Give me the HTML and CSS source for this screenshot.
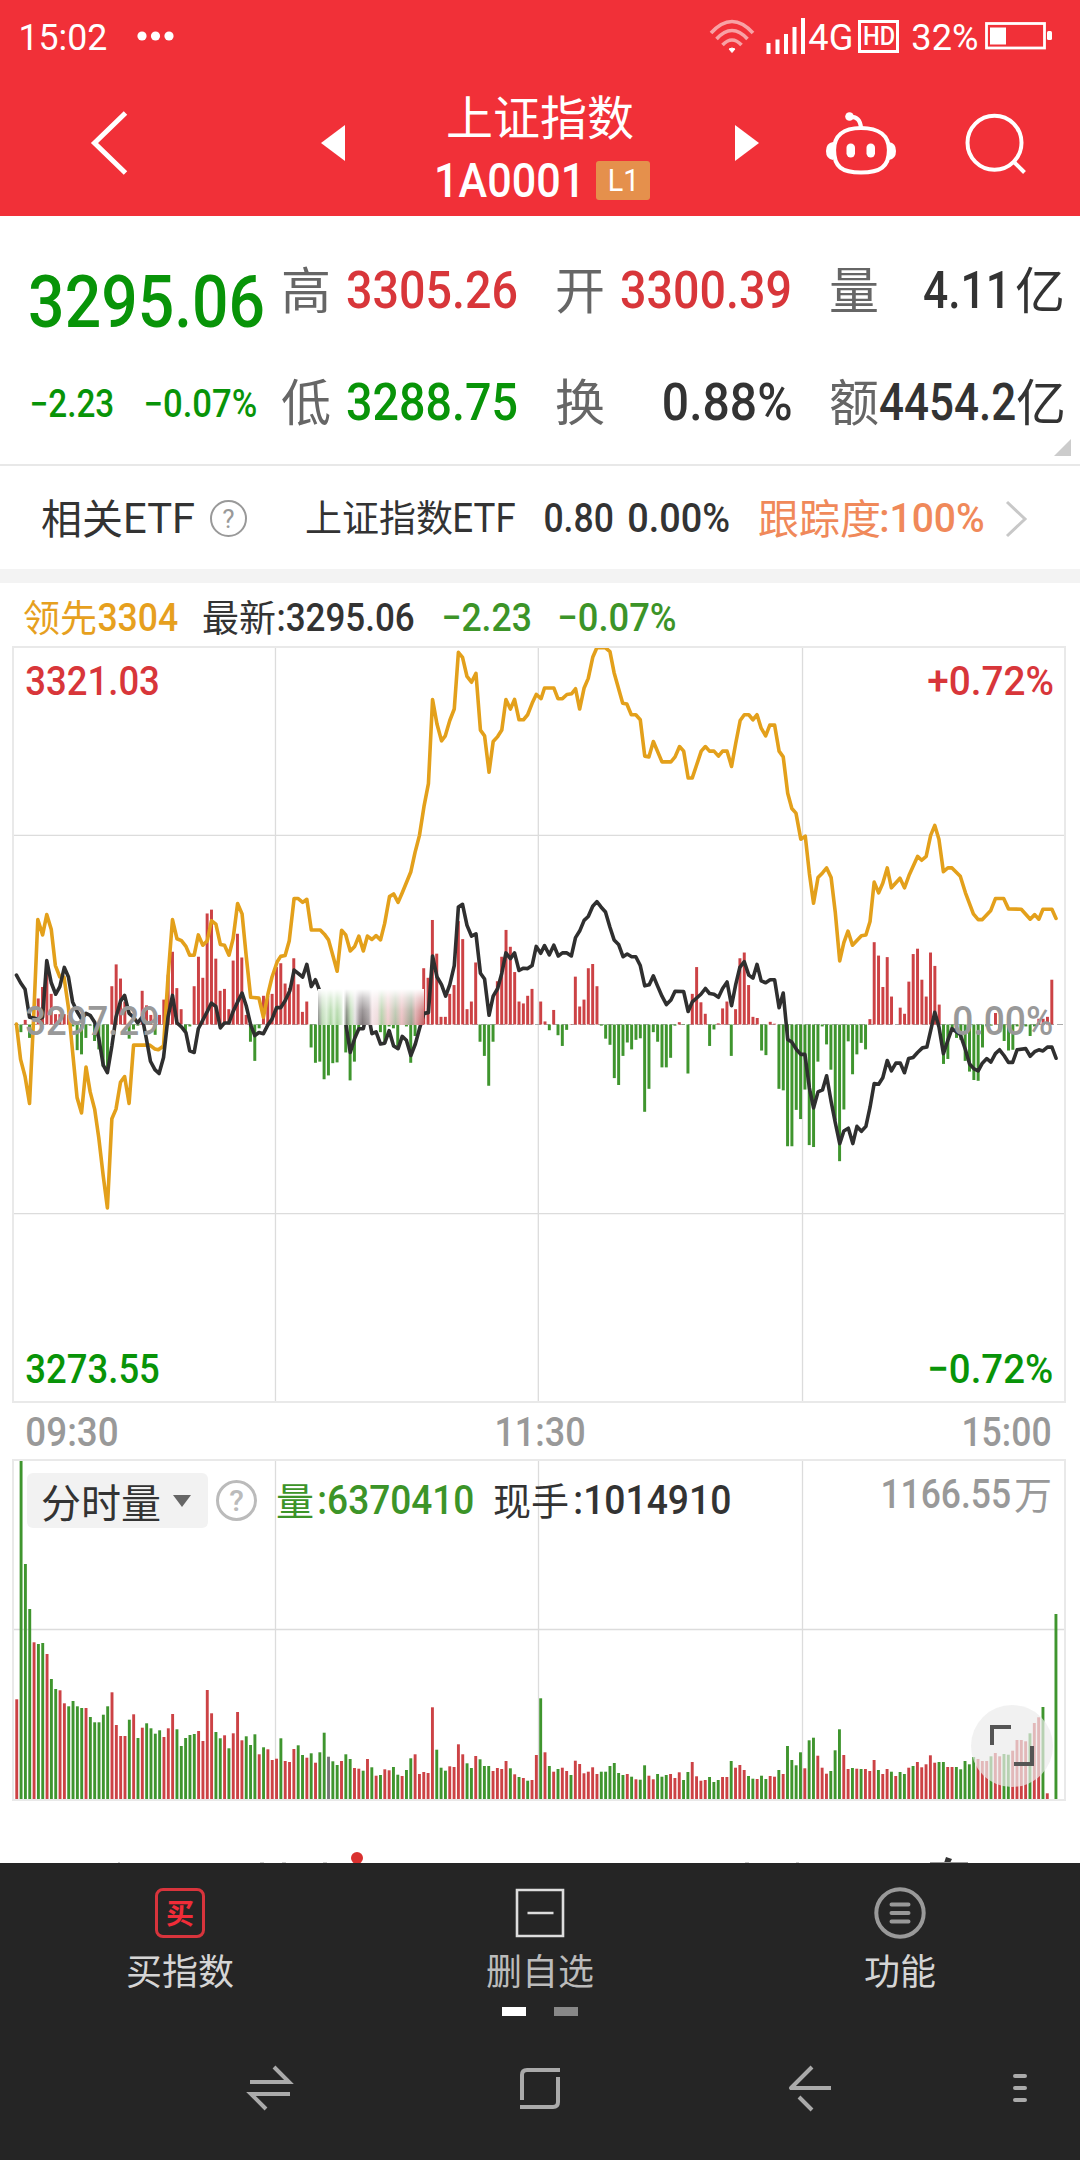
FILE: index.html
```html
<!DOCTYPE html>
<html lang="zh-CN">
<head>
    <meta charset="UTF-8">
    <meta name="viewport" content="width=device-width, initial-scale=1.0">
    <title>上证指数 1A0001</title>
    <link rel="stylesheet" href="styles.css">
</head>
<body>
<div class="phone">
    <header class="header">
        <div class="status">
            <span class="n clock" data-w="86">15:02</span>
            <svg class="dots" width="38" height="12"><g fill="#fff"><circle cx="5" cy="6" r="4.6"/><circle cx="18.500" cy="6" r="4.6"/><circle cx="32" cy="6" r="4.6"/></g></svg>
            <svg class="signal" width="97" height="40" viewBox="709 16 97 40">
                <g fill="none" stroke="#fff" stroke-width="3.6" opacity=".55">
                    <path d="M711 33Q732 10 753 33"/>
                    <path d="M716.500 39Q732 22 747.500 39"/>
                    <path d="M722.500 45Q732 35 741.500 45"/>
                </g>
                <path d="M729 49Q732 47 735 49L732 52.500z" fill="#fff" stroke="#fff" stroke-linejoin="round"/>
                <path d="M768.500 54V43M777.500 54V39.500M786 54V34M794.500 54V27M803 54V18" stroke="#fff" stroke-width="4"/>
            </svg>
            <span class="n net" data-w="42">4G</span>
            <span class="hd"><span class="n" data-w="30">HD</span></span>
            <span class="n percent" data-w="64">32%</span>
            <svg class="battery" width="68" height="28"><rect x="1.500" y="1.500" width="58" height="24.500" fill="none" stroke="#fff" stroke-width="2.800"/><path d="M5 5.500h16v17H5z" fill="#fff"/><rect x="62" y="9" width="5" height="9" rx="1.500" fill="#fff"/></svg>
        </div>
        <div class="titlebar">
            <svg class="back" width="38" height="64"><path d="M35.500 2L4.500 32l31 30" fill="none" stroke="#fff" stroke-width="5"/></svg>
            <svg class="tri" width="24" height="36"><path d="M24 0v36L0 18z" fill="#fff"/></svg>
            <div class="title">
                <div class="name zh">上证指数</div>
                <div class="code"><span class="n" data-w="147">1A0001</span><span class="badge"><span class="n" data-w="29">L1</span></span></div>
            </div>
            <svg class="tri" width="24" height="36"><path d="M0 0v36l24-18z" fill="#fff"/></svg>
            <svg class="robot" width="70" height="64" viewBox="826 110 70 64">
                <g fill="none" stroke="#fff" stroke-width="4.200">
                    <path d="M861 127C879 127 889 135 889 149C889 166 880 171.500 861 171.500C842 171.500 834 166 834 149C834 135 843 127 861 127z"/>
                    <path d="M850 116Q860 115 861 127"/>
                </g>
                <g fill="#fff"><circle cx="849.500" cy="115.500" r="4.300"/><rect x="846.500" y="142.500" width="8.500" height="14" rx="4.200"/><rect x="866.500" y="142.500" width="8.500" height="14" rx="4.200"/><path d="M833 141Q826 142 826 150T833 159zM889 141Q896 142 896 150T889 159z"/></g>
            </svg>
            <svg width="62" height="62" viewBox="965 112 62 62"><g fill="none" stroke="#fff" stroke-width="4"><circle cx="994.500" cy="142.700" r="27"/><path d="M1013 161l11.500 11.500"/></g></svg>
        </div>
    </header>

    <section class="quote">
        <div class="main"><span class="n last green" data-w="231">3295.06</span></div>
        <div class="cell"><span class="zh">高</span><span class="n red" data-w="168">3305.26</span></div>
        <div class="cell"><span class="zh">开</span><span class="n red" data-w="168">3300.39</span></div>
        <div class="cell"><span class="zh">量</span><span class="amount"><span class="n" data-w="84">4.11</span><span class="zh dark">亿</span></span></div>
        <div class="main change"><span class="n green" data-w="82">−2.23</span><span class="n green" data-w="111">−0.07%</span></div>
        <div class="cell"><span class="zh">低</span><span class="n green" data-w="168">3288.75</span></div>
        <div class="cell"><span class="zh">换</span><span class="n" data-w="126">0.88%</span></div>
        <div class="cell"><span class="zh">额</span><span class="amount tight"><span class="n" data-w="133">4454.2</span><span class="zh dark">亿</span></span></div>
        <i class="corner"></i>
    </section>

    <section class="etf">
        <span class="zh big">相关</span><span class="n latin" data-w="68">ETF</span>
        <span class="help"><span>?</span></span>
        <span class="zh mid">上证指数</span><span class="n latin small" data-w="60">ETF</span>
        <span class="n price" data-w="67">0.80</span>
        <span class="n rate" data-w="100">0.00%</span>
        <span class="zh big orange track">跟踪度</span><span class="n orange" data-w="102">:100%</span>
        <svg class="more" width="24" height="38"><path d="M2 2l18 17L2 36" fill="none" stroke="#c8c8c8" stroke-width="3"/></svg>
    </section>

    <section class="legend">
        <span class="zh lead">领先</span><span class="n lead" data-w="78">3304</span>
        <span class="zh newest">最新</span><span class="n" data-w="135">:3295.06</span>
        <span class="n lime diff" data-w="87">−2.23</span>
        <span class="n lime pct" data-w="116">−0.07%</span>
    </section>

    <section class="chart">
        <svg class="plot" width="1052" height="755" viewBox="38 18 3054 1972" preserveAspectRatio="none">
            <path class="grid" d="M800 18V1990M1563 18V1990M2330 18V1990M38 510H3092M38 1498H3092"/>
            <path class="zero" d="M38 1004H3092"/>
            <g id="momentum"></g>
            <polyline class="line leading" points="48,1003 60,1095 73,1140 86,1210 98,985 110,730 124,770 136,717 149,755 161,850 174,880 186,880 199,960 211,1075 224,1195 237,1235 250,1115 262,1180 275,1225 287,1300 300,1400 312,1483 325,1250 337,1225 350,1155 362,1140 375,1210 388,1058 435,1058 450,1068 460,1070 475,1060 488,880 501,730 514,780 527,785 540,800 551,823 564,823 576,770 589,797 602,785 614,733 627,742 640,795 652,797 665,823 677,780 690,688 703,715 715,825 728,933 752,935 765,985 778,925 790,880 805,840 815,826 828,824 840,785 854,675 866,675 879,685 891,677 904,757 930,757 942,768 954,783 967,825 979,865 992,758 1004,770 1017,812 1030,800 1042,773 1055,812 1067,773 1080,782 1092,772 1105,783 1117,740 1131,670 1143,663 1156,685 1168,660 1193,605 1205,555 1218,510 1231,435 1244,375 1256,155 1269,220 1282,263 1293,250 1306,210 1319,180 1331,32 1343,45 1356,95 1369,110 1382,87 1395,235 1407,250 1420,345 1432,265 1445,252 1457,235 1469,155 1482,180 1494,155 1507,208 1520,208 1532,195 1545,165 1557,142 1571,153 1581,125 1608,125 1620,153 1633,153 1646,142 1660,140 1671,127 1683,180 1696,125 1708,100 1721,45 1733,20 1758,20 1771,30 1783,85 1808,165 1820,167 1833,195 1846,195 1859,208 1872,303 1884,305 1897,265 1922,318 1948,318 1960,305 1973,278 1985,290 1998,360 2010,360 2023,325 2036,290 2048,278 2060,290 2073,290 2086,303 2098,290 2111,290 2124,330 2136,270 2149,210 2161,195 2174,195 2186,208 2198,195 2210,230 2223,250 2235,222 2249,222 2262,290 2274,305 2287,400 2299,440 2311,452 2325,520 2338,512 2350,610 2362,687 2375,620 2388,608 2400,595 2413,620 2425,710 2438,838 2450,790 2462,760 2475,797 2501,772 2514,770 2526,735 2538,632 2551,660 2563,635 2576,595 2588,647 2613,622 2626,647 2639,615 2664,565 2676,575 2689,565 2702,510 2714,484 2726,520 2739,605 2752,595 2764,595 2788,617 2803,660 2826,715 2840,730 2852,730 2876,707 2890,675 2914,675 2928,702 2965,703 2991,729 3004,717 3016,729 3028,703 3054,703 3066,727"/>
            <polyline class="line index" points="48,875 60,895 73,912 86,985 98,987 111,990 124,985 136,837 149,895 162,925 174,905 187,855 199,880 211,945 224,970 237,990 250,975 262,980 275,998 287,1040 300,1110 312,1130 325,1060 337,985 350,943 362,928 375,975 388,985 400,1000 413,985 425,1040 437,1100 450,1122 462,1132 475,1090 488,985 501,928 514,1000 527,1010 540,1025 551,1073 564,1077 576,1015 602,970 614,948 627,957 640,1013 652,1000 665,1000 677,970 690,945 703,922 715,955 728,1005 740,1033 752,1025 765,1028 778,1005 790,990 803,960 815,960 828,942 842,915 854,862 879,880 891,847 904,905 916,887 928,915 940,960 965,960 1004,1000 1017,1077 1030,1040 1042,1015 1055,1015 1067,965 1080,1028 1092,1023 1105,1055 1117,1053 1130,1020 1143,1060 1156,1067 1168,1035 1180,1045 1193,1085 1206,1055 1218,1015 1231,975 1244,973 1256,825 1269,880 1282,900 1294,930 1306,900 1319,850 1331,697 1343,690 1356,745 1369,773 1382,767 1395,870 1407,885 1420,980 1432,930 1445,910 1457,870 1469,817 1482,832 1494,817 1507,863 1520,857 1532,858 1545,850 1557,800 1570,818 1581,798 1595,822 1608,797 1621,825 1633,817 1646,817 1659,825 1671,777 1683,760 1696,732 1708,722 1721,695 1733,683 1745,697 1758,710 1771,750 1783,783 1796,795 1809,827 1821,820 1834,827 1846,827 1859,850 1872,903 1885,900 1897,877 1909,903 1922,930 1935,952 1948,940 1960,917 1985,918 1998,970 2010,945 2035,925 2048,910 2060,923 2073,925 2086,933 2098,910 2111,893 2124,955 2136,900 2148,855 2161,840 2174,875 2186,883 2198,847 2210,890 2223,895 2236,887 2249,887 2262,960 2274,922 2287,1043 2299,1050 2313,1070 2325,1082 2337,1082 2350,1170 2362,1222 2375,1180 2388,1175 2400,1138 2413,1205 2425,1260 2438,1315 2450,1282 2463,1275 2476,1315 2488,1270 2501,1283 2514,1270 2526,1220 2538,1158 2551,1160 2563,1143 2576,1098 2588,1125 2601,1105 2614,1105 2626,1130 2638,1093 2651,1090 2664,1077 2678,1065 2691,1063 2702,1020 2714,972 2726,1010 2739,1080 2752,1045 2764,1015 2788,1030 2803,1070 2815,1107 2828,1120 2840,1125 2852,1105 2865,1093 2877,1102 2890,1080 2902,1070 2915,1085 2928,1103 2940,1103 2953,1070 2978,1067 2991,1087 3004,1075 3016,1070 3028,1073 3041,1063 3054,1063 3066,1092"/>
        </svg>
        <div class="smear"></div>
        <span class="n tag top left red" data-w="131">3321.03</span>
        <span class="n tag top right red" data-w="123">+0.72%</span>
        <span class="n tag middle left grey" data-w="131">3297.29</span>
        <span class="n tag middle right grey" data-w="98">0.00%</span>
        <span class="n tag bottom left green" data-w="131">3273.55</span>
        <span class="n tag bottom right green" data-w="123">−0.72%</span>
    </section>

    <div class="times">
        <span class="n" data-w="90">09:30</span>
        <span class="n" data-w="88">11:30</span>
        <span class="n" data-w="87">15:00</span>
    </div>

    <section class="volume">
        <svg class="plot" width="1052" height="340">
            <path class="grid" d="M262.500 0V340M525.500 0V340M789.500 0V340M0 169.500H1052"/>
            <g id="bars"></g>
        </svg>
        <div class="volhead">
            <span class="picker"><span class="zh">分时量</span><svg width="18" height="12"><path d="M0 0h18l-9 12z" fill="#666"/></svg></span>
            <span class="help thick"><span>?</span></span>
            <span class="zh lime">量</span><span class="n lime" data-w="154">:6370410</span>
            <span class="zh hand">现手</span><span class="n" data-w="155">:1014910</span>
            <span class="n grey max" data-w="128">1166.55</span><span class="zh grey">万</span>
        </div>
        <div class="expand"><svg width="44" height="44"><path d="M2 21V3h19M42 22v18H24" fill="none" stroke="#555" stroke-width="4"/></svg></div>
    </section>

    <div class="peek">
        <svg width="1080" height="63">
            <circle cx="357" cy="58" r="6" fill="#d9302f"/>
            <path d="M946 57l6 2-2 4h-6z" fill="#333"/>
            <path d="M930 62.500h38" stroke="#999"/>
            <path d="M118 62.500h2M260 62.500h4M282 62.500h4M323 62.500h4M745 62.500h4M796 62.500h3" stroke="#ccc"/>
        </svg>
    </div>

    <footer class="footer">
        <nav class="tabs">
            <a class="tab"><span class="buy zh">买</span><span class="zh">买指数</span></a>
            <a class="tab"><svg width="50" height="50"><path d="M2 2h46v46H2zM12.500 25h26" fill="none" stroke="#ddd" stroke-width="2.600"/></svg><span class="zh dim">删自选</span></a>
            <a class="tab"><svg width="52" height="52"><g fill="none" stroke="#999" stroke-width="4"><circle cx="26" cy="26" r="23.700"/><path d="M17.500 17.500h17M17.500 26h17M17.500 34.500h17" stroke-linecap="round"/></g></svg><span class="zh">功能</span></a>
        </nav>
        <div class="pager"><i class="on"></i><i></i></div>
        <svg class="sysnav" width="1080" height="60" viewBox="0 2058 1080 60">
            <g fill="none" stroke="#aaa" stroke-width="4">
                <path d="M250 2082h39L274 2067M290 2094h-39L266 2109"/>
                <path d="M560 2070H527Q522 2070 522 2075V2100M520 2107H553Q558 2107 558 2102V2077"/>
                <path d="M812 2067L791 2088H831M799 2097l13 13" stroke-linejoin="round"/>
                <path d="M1015 2076h10M1015 2088h10M1015 2100h10" stroke-linecap="round"/>
            </g>
        </svg>
    </footer>
</div>

<script>
    // squeeze the digits so that they look like a condensed DIN face
    function fit() {
        document.querySelectorAll('.n').forEach(el => {
            let text = document.createElement('span');
            text.textContent = el.textContent;
            text.className = 'ink';
            el.textContent = '';
            el.appendChild(text);
            let w = Number(el.dataset.w);
            let size = parseFloat(getComputedStyle(el).fontSize);
            let scale = w / (text.offsetWidth - size * 0.09);
            el.style.width = w + 'px';
            text.style.transform = 'scaleX(' + scale.toFixed(4) + ') translateX(-0.045em)';
        });
    }

    // one value per minute, above or below the previous close
    let momentum = [0, -20, 12, -35, 0, 68, 98, 160, 80, 27, 27, 27, 25, -5, -67, -78, -35, -3, -43, -65,
        -110, -125, 100, 157, 120, 60, -37, -13, -3, 88, 50, 25, -27, 25, 65, 130, 190, 95, 40, -20,
        -5, 100, 177, 122, 290, 300, 172, 88, 93, 40, 167, 237, 175, 25, -45, -95, -10, 75, 75, 80,
        150, 160, 107, 95, 173, 105, 33, 60, -60, -100, -97, -143, -133, -101, -99, 0, -73, -146, -97, -10,
        0, 0, 0, 0, -20, -50, -5, -10, -65, 0, -5, -100, -30, 0, 147, 122, 273, 185, 20, 20,
        80, 103, 270, 223, 40, 60, 162, -45, -82, -160, -45, 113, 177, 247, 203, 137, 60, 55, 75, 93,
        0, 60, 8, -15, 38, -28, -56, -14, 1, 125, 47, 65, 147, 158, 100, -3, -37, -53, -140, -158,
        -82, -47, -65, -40, -36, -228, -168, -20, -45, -112, -112, -87, -3, 6, -1, -128, 80, 150, 58, 28,
        -56, -13, 3, 42, 60, -82, 40, 173, 188, 103, 20, 17, -68, -80, 7, 2, -168, -172, -318, -318,
        -223, -247, -170, -315, -320, -97, -5, -52, -118, -250, -357, -222, -44, -130, -78, -48, -65, 14, 215, 180,
        98, 176, 73, 0, 44, 28, 112, 184, 198, 117, 73, 188, 153, 52, -103, -90, -10, -35, -40, -95,
        -123, -145, -147, -60, -5, -3, 30, -20, -43, -68, -66, -5, 10, -5, -30, -5, 15, 15, 20, 117, 0];

    // r = up minute, g = down minute, k = unchanged
    let volume = 'r302 g1022 g708 g573 r473 g468 g471 r438 g363 g333 r329 r290 g281 g297 g281 g276 r276 g249 g233 g233 ' +
        'g256 g281 r323 r225 r192 r192 g241 r257 g186 r217 g230 g215 g199 g209 r189 r215 r258 g212 g162 g186 ' +
        'g195 g198 r207 r177 r330 r260 g204 g185 r194 g155 r200 r264 r179 g191 g165 g197 r137 g158 r152 r120 ' +
        'r124 g185 r117 r114 r153 g164 g135 r127 g140 r112 g143 g202 k130 g116 g105 r117 g137 g123 r96 r94 ' +
        'g88 r123 g98 r73 g75 r92 r89 g99 g76 r72 g90 g125 r137 r78 r84 r81 r278 g151 g97 g88 ' +
        'r101 r99 r167 r137 g110 g96 r132 g122 g102 g102 r87 r96 r93 r117 g95 r77 g69 r66 g58 r60 ' +
        'r135 g305 r143 g102 r85 g93 r97 r87 g75 r118 r108 r80 r85 r98 r78 g85 g85 g102 g111 g81 ' +
        'g75 r78 g70 r62 g61 g104 r73 r62 g78 g70 g75 r78 r66 r83 g60 g84 r114 r71 r58 r60 ' +
        'g69 g54 g60 r69 r69 g117 r97 r105 r90 g72 g64 r63 g73 g63 r72 r70 g90 r78 g162 g120 ' +
        'g104 g143 r95 g179 g187 r133 r97 r79 g87 g149 g212 r135 r93 g96 r94 g93 r93 r87 r120 g90 ' +
        'r78 r93 g85 r72 g84 g78 r97 g102 r114 r98 r107 r134 r112 g114 g114 r99 r99 g99 g92 g117 ' +
        'g107 g129 r123 r117 r117 g131 r141 r131 g138 g136 r148 r180 r180 r176 g200 r231 r248 g279 r20 k0 g558';

    let out = '';
    momentum.forEach((v, i) => {
        if (!v) return;
        let x = (48 + 12.575 * i - 4).toFixed(1);
        out += '<rect class="' + (v > 0 ? 'r' : 'g') + '" x="' + x + '" y="' + (1004 - Math.max(v, 0)) + '" width="8.6" height="' + Math.abs(v) + '"/>';
    });
    document.getElementById('momentum').innerHTML = out;

    out = '';
    volume.split(' ').forEach((item, i) => {
        let h = Number(item.slice(1)) / 3;
        let x = (2.3 + 4.33 * i).toFixed(2);
        out += '<rect class="' + item[0] + '" x="' + x + '" y="' + (340 - h).toFixed(1) + '" width="2.9" height="' + h.toFixed(1) + '"/>';
    });
    document.getElementById('bars').innerHTML = out;

    fit();
</script>
</body>
</html>
```

FILE: styles.css
```css
* { box-sizing: border-box; }
body { margin: 0; background: #fff; color: #333; font-family: Roboto, "Noto Sans CJK SC", sans-serif; }
.phone { width: 1080px; height: 2160px; overflow: hidden; }
svg { display: block; flex: none; }

.n { display: inline-block; flex: none; line-height: 1; font-weight: 500; font-size: 40px; white-space: nowrap; }
.ink { display: inline-block; transform-origin: 0 50%; white-space: nowrap; }
.zh { flex: none; font-family: "Noto Sans CJK SC", sans-serif; line-height: 1; margin-top: -.1em; white-space: nowrap; }
.red { color: #d8363a; }
.green { color: #089408; }
.lime { color: #3c9428; }
.grey { color: #999; }
.orange { color: #f0895a; }

.header { height: 216px; background: #f13038; color: #fff; }
.status { display: flex; align-items: center; height: 72px; padding-left: 20px; }
.status .n { font-size: 36px; font-weight: 400; }
.clock { margin-top: 3px; }
.dots { margin-left: 31px; }
.signal { margin-left: 534px; }
.net { margin: 3px 6px 0 4px; }
.hd { display: flex; align-items: center; justify-content: center; width: 41px; height: 33px; border: 3px solid #fff; }
.status .hd .n { font-size: 25px; font-weight: 500; }
.percent { margin: 3px 8px 0 14px; }
.titlebar { display: grid; grid-template-columns: 231px 115px 299px 91px 139px 62px; padding-left: 90px; height: 144px; align-items: center; }
.titlebar > svg { margin-top: -2px; }
.title { padding-top: 13px; }
.name { font-size: 47px; margin: -6px 0 0 10px; }
.code { display: flex; align-items: center; margin-top: 19px; }
.code .n { font-size: 48px; }
.badge { display: flex; align-items: center; justify-content: center; width: 54px; height: 39px; margin-left: 13px; border-radius: 3px; background: #e5904c; }
.badge .n { font-size: 31px; font-weight: 400; }

.quote { position: relative; display: grid; grid-template-columns: 211px repeat(3, 235px); grid-auto-rows: 112px; column-gap: 39px; align-items: center; height: 250px; padding: 17px 16px 0 31px; border-bottom: 2px solid #e8e8e8; }
.quote .last { font-size: 73px; margin-top: 27px; }
.quote .change { display: flex; gap: 32px; padding-top: 6px; }
.quote .change .n { font-size: 38px; }
.cell { display: flex; align-items: center; justify-content: space-between; color: #666; }
.cell .zh { font-size: 50px; }
.cell .n { font-size: 52px; margin-top: 3px; }
.cell .n:not(.red):not(.green), .cell .dark { color: #333; }
.amount { display: flex; align-items: center; gap: 6px; margin-right: -1px; }
.tight { gap: 2px; margin-left: -10px; }
.tight .zh { margin-right: -1px; }
.corner { position: absolute; right: 9px; bottom: 8px; border-style: solid; border-width: 0 0 17px 17px; border-color: transparent transparent #ccc; }

.etf { display: flex; align-items: center; height: 103px; padding: 2px 0 0 41px; }
.etf .n { font-size: 41px; }
.etf .latin { font-size: 43px; font-weight: 400; margin-left: 2px; }
.etf .small { font-size: 40px; margin-left: 1px; }
.big { font-size: 41px; }
.mid { font-size: 37px; margin-left: 58px; }
.help { display: flex; align-items: center; justify-content: center; flex: none; width: 37px; height: 37px; margin-left: 17px; border: 2px solid #999; border-radius: 50%; color: #999; font-size: 26px; line-height: 1; }
.price { margin-left: 31px; }
.rate { margin-left: 17px; }
.track { margin-left: 29px; }
.more { margin-left: 22px; }

.legend { display: flex; align-items: center; height: 78px; padding: 6px 0 0 23px; border-top: 14px solid #f3f3f3; }
.legend .zh { font-size: 37px; }
.legend .n { font-size: 39px; margin-left: 2px; }
.lead { color: #e6a01e; }
.legend .newest { margin-left: 25px; }
.legend .diff { margin-left: 30px; }
.legend .pct { margin-left: 29px; }

.chart { position: relative; width: 1052px; height: 755px; margin-left: 13px; }
.plot { outline: 2px solid #e9e9e9; outline-offset: -1px; }
.grid { fill: none; stroke: #dcdcdc; stroke-width: 1.3; vector-effect: non-scaling-stroke; }
.zero { stroke: #aaa; stroke-width: 1; stroke-dasharray: 6 3; vector-effect: non-scaling-stroke; }
.line { fill: none; stroke-width: 3.6; stroke-linejoin: round; stroke-linecap: round; vector-effect: non-scaling-stroke; }
.leading { stroke: #e3a01b; }
.index { stroke: #2f2f2f; }
.r { fill: #cc4245; }
.g { fill: #3f952e; }
.k { fill: #777; }
.tag { position: absolute; font-size: 41px; }
.left { left: 14px; }
.right { right: 13px; }
.top { top: 14px; }
.middle { top: 354px; }
.bottom { bottom: 12px; }
/* vertical fade over the middle of the morning session */
.smear { position: absolute; left: 305px; top: 342px; width: 106px; height: 36px; background: linear-gradient(#fff 0, rgba(255,255,255,.65) 25%, rgba(255,255,255,.3) 60%, rgba(255,255,255,.1)), linear-gradient(90deg, #777 0, #b5d5ad 4%, #d3ebcd 8%, #9fce93 12%, #d3ebcd 15%, #9fce93 18%, #c9e6c2 22%, #fff 24%, #667060 27%, #b5dbab 31%, #e3dee0 35%, #8d8387 39%, #6e6668 42%, #9a9294 48%, #f3dfe2 51%, #ecd5d6 56%, #a5c797 60%, #f0c5c8 66%, #a8b89a 73%, #e8b5b8 79%, #8d9a80 88%, #d99a9c 92%, #b84a4c 100%); }

.times { display: flex; justify-content: space-between; align-items: center; height: 58px; padding: 2px 30px 0 27px; color: #999; }
.times .n { font-size: 41px; }

.volume { position: relative; width: 1052px; height: 340px; margin-left: 13px; }
.volhead { position: absolute; left: 14px; top: 13px; display: flex; align-items: center; height: 55px; }
.volhead .zh { font-size: 38px; }
.picker { display: flex; align-items: center; justify-content: space-between; width: 181px; height: 55px; padding: 0 17px 0 14px; border-radius: 6px; background: #f2f2f2; }
.volhead .picker .zh { font-size: 40px; margin-top: 0; }
.thick { width: 41px; height: 41px; margin: 0 19px 0 8px; border: 3px solid #bbb; color: #bbb; font-size: 30px; font-weight: 500; }
.volhead .n { margin: 1px 0 0 5px; }
.volhead .hand { margin-left: 20px; }
.volhead .hand + .n { margin-left: 6px; }
.volhead .max { margin: -12px 4px 0 152px; }
.volhead .max + .zh { margin-top: -16px; }
.expand { position: absolute; left: 958px; top: 245px; display: flex; align-items: center; justify-content: center; width: 82px; height: 82px; border-radius: 50%; background: rgba(235, 235, 235, .7); }

.peek { height: 63px; }

.footer { height: 297px; background: #252525; color: #d5d5d5; }
.tabs { display: grid; grid-template-columns: repeat(3, 1fr); height: 144px; }
.tab { display: flex; flex-direction: column; align-items: center; padding-top: 25px; }
.tab .zh { font-size: 36px; line-height: 40px; margin-top: 11px; }
.tab svg + .zh { margin-top: 11px; }
.tab svg[width="52"] { margin-top: -1px; }
.tab svg[width="52"] + .zh { margin-top: 10px; }
.tab .buy { width: 50px; height: 50px; margin-top: 0; border: 3px solid #d8343c; border-radius: 8px; color: #f02c38; font-size: 28px; font-weight: 700; line-height: 43px; text-align: center; }
.tab .dim { color: #bbb; }
.pager { display: flex; justify-content: center; gap: 28px; }
.pager i { width: 24px; height: 9px; background: #888; }
.pager .on { background: #fff; }
.sysnav { margin-top: 42px; }
```
